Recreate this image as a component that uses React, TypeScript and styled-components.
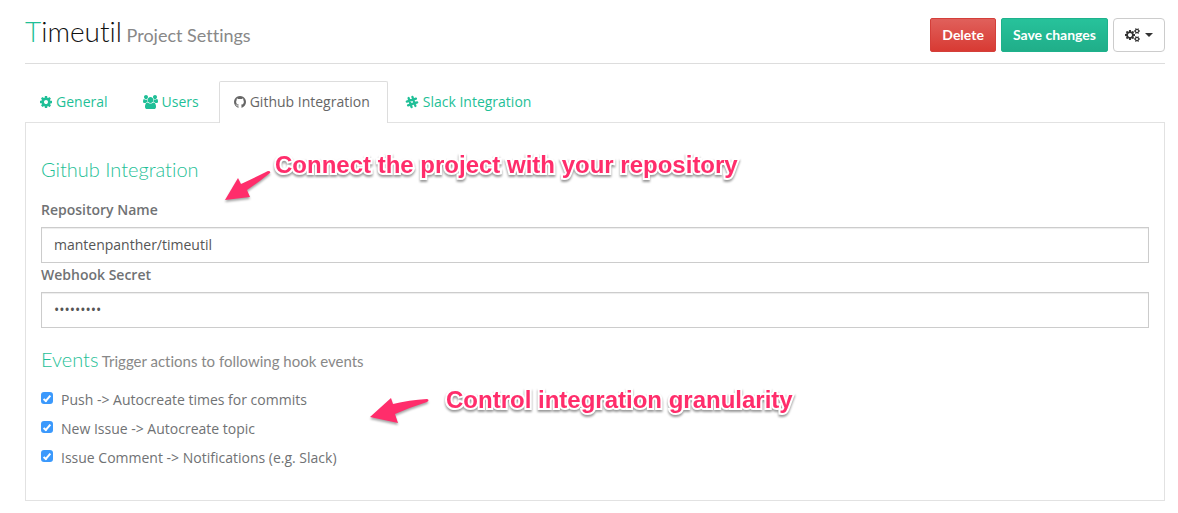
import React from 'react';
import styled, { createGlobalStyle, css } from 'styled-components';

const GREEN = '#1fbf97';
const PINK = '#ff2d6b';

const GlobalStyle = createGlobalStyle`
  *, *::before, *::after { box-sizing: border-box; }
  body {
    margin: 0;
    background: #fff;
    color: #707274;
    font-family: "Open Sans", sans-serif;
    font-size: 14px;
    line-height: 20px;
    font-variant-ligatures: none;
  }
`;

const Page = styled.main`
  padding: 15px 13px 12px 25px;
`;

const Header = styled.header`
  display: flex;
  justify-content: space-between;
  align-items: flex-start;
  padding-bottom: 11px;
  border-bottom: 1px solid #ddd;
`;

const Title = styled.h1`
  margin: 0;
  color: #111;
  font-family: Lato, sans-serif;
  font-size: 28px;
  font-weight: 300;
  line-height: 32px;
`;

const Initial = styled.span`
  color: ${GREEN};
`;

const Subtitle = styled.small<{ $size: number }>`
  color: #888;
  font-family: Lato, sans-serif;
  font-size: ${p => p.$size}px;
  font-weight: 400;
`;

const Actions = styled.div`
  display: flex;
  gap: 5px;
  padding-top: 3px;
`;

const tones = {
  danger: css`
    color: #fff;
    border-color: #d43f3a;
    background: linear-gradient(#e0605b, #d83a33);
  `,
  primary: css`
    color: #fff;
    border-color: #1eb28c;
    background: linear-gradient(#27c29b, #20ae89);
  `,
  plain: css`
    color: #333;
    border-color: #ccc;
    border-radius: 4px;
    background: #fff;
  `,
};

const Button = styled.button<{ $tone: keyof typeof tones }>`
  display: flex;
  align-items: center;
  gap: 5px;
  height: 34px;
  padding: 0 11px;
  border: 1px solid;
  border-radius: 2px;
  font-family: Lato, sans-serif;
  font-size: 14px;
  font-weight: 700;
  line-height: 20px;
  cursor: pointer;
  ${p => tones[p.$tone]}
`;

const Caret = styled.span`
  border: 4px solid transparent;
  border-top-color: currentColor;
  border-bottom: 0;
`;

const Tabs = styled.nav`
  display: flex;
  margin-top: 17px;
`;

const Tab = styled.a<{ $active?: boolean }>`
  display: flex;
  align-items: center;
  gap: 4px;
  height: 42px;
  margin-right: 2px;
  padding: 0 17px 2px 14px;
  border: 1px solid transparent;
  border-bottom: 0;
  border-radius: 2px 2px 0 0;
  color: ${GREEN};
  text-decoration: none;
  white-space: nowrap;
  ${p => p.$active && css`
    position: relative;
    z-index: 1;
    color: #666;
    border-color: #ddd;
    background: #fff;
  `}
`;

const Glyph = styled.svg`
  fill: currentColor;
`;

const Panel = styled.form`
  position: relative;
  margin-top: -1px;
  padding: 30px 15px 32px;
  border: 1px solid #e2e2e2;
`;

const SectionTitle = styled.h2`
  margin: 0;
  padding: 4px 0;
  color: ${GREEN};
  font-family: Lato, sans-serif;
  font-size: 20px;
  font-weight: 300;
  line-height: 24px;
`;

const Fields = styled.div`
  padding: 13px 0 15px;
`;

const Label = styled.label`
  display: block;
  padding: 2px 0 7px;
  font-weight: 600;
`;

const Input = styled.input`
  display: block;
  width: 100%;
  height: 36px;
  padding: 0 12px 2px;
  border: 1px solid #ccc;
  border-radius: 0;
  color: #555;
  background: #fff;
  box-shadow: inset 0 1px 1px rgba(0, 0, 0, 0.075);
  font: inherit;
`;

const Events = styled.div`
  display: flex;
  flex-direction: column;
  gap: 9px;
  padding-top: 13px;
`;

const Option = styled.label`
  display: flex;
  align-items: flex-start;
  gap: 8px;
`;

const Check = styled.input`
  appearance: none;
  width: 12px;
  height: 12px;
  margin: 2px 0 0;
  border-radius: 3px;
  background: #3b99fc;
  display: grid;
  place-items: center;
  &:checked::after {
    content: "";
    width: 4px;
    height: 8px;
    border: solid #fff;
    border-width: 0 2px 2px 0;
    transform: rotate(40deg);
  }
`;

const Note = styled.div<{ $top: number; $left: number }>`
  position: absolute;
  top: ${p => p.$top}px;
  left: ${p => p.$left}px;
  display: flex;
  pointer-events: none;
`;

const Arrow = styled.svg`
  overflow: visible;
  fill: ${PINK};
  filter: drop-shadow(0 2px 1px rgba(0, 0, 0, 0.35));
`;

const NoteText = styled.span`
  color: ${PINK};
  font-family: "Liberation Sans", sans-serif;
  font-size: 24px;
  font-weight: 700;
  line-height: 28px;
  white-space: nowrap;
  -webkit-text-stroke: 4px #fff;
  paint-order: stroke fill;
  filter: drop-shadow(0 2px 1px rgba(0, 0, 0, 0.4));
`;

const GearIcon = () => (
  <Glyph viewBox="128 128 1536 1536" width="12" height="12">
    <path d="M1152 896q0-106-75-181t-181-75-181 75-75 181 75 181 181 75 181-75 75-181zm512-109v222q0 12-8 23t-20 13l-185 28q-19 54-39 91 35 50 107 138 10 12 10 25t-9 23q-27 37-99 108t-94 71q-12 0-26-9l-138-108q-44 23-91 38-16 136-29 186-7 28-36 28h-222q-14 0-24.500-8.500t-11.500-21.500l-28-184q-49-16-90-37l-141 107q-10 9-25 9-14 0-25-11-126-114-165-168-7-10-7-23 0-12 8-23 15-21 51-66.500t54-70.500q-27-50-41-99l-183-27q-13-2-21-12.500t-8-23.500v-222q0-12 8-23t19-13l186-28q14-46 39-92-40-57-107-138-10-12-10-24 0-10 9-23 26-36 98.500-107.500t94.500-71.500q13 0 26 10l138 107q44-23 91-38 16-136 29-186 7-28 36-28h222q14 0 24.500 8.500t11.500 21.500l28 184q49 16 90 37l142-107q9-9 24-9 13 0 25 10 129 119 165 170 7 8 7 22 0 12-8 23-15 21-51 66.500t-54 70.500q26 50 41 98l183 28q13 2 21 12.500t8 23.500z" />
  </Glyph>
);

const GearsIcon = () => (
  <Glyph viewBox="0 0 1920 1792" width="15" height="14">
    <path d="M896 896q0-106-75-181t-181-75-181 75-75 181 75 181 181 75 181-75 75-181zm768 512q0-52-38-90t-90-38-90 38-38 90q0 53 37.500 90.500t90.500 37.500 90.500-37.500 37.500-90.500zm0-1024q0-52-38-90t-90-38-90 38-38 90q0 53 37.500 90.500t90.500 37.500 90.500-37.500 37.500-90.500zm-384 421v185q0 10-7 19.500t-16 10.500l-155 24q-11 35-32 76 34 48 90 115 7 11 7 20 0 12-7 19-23 30-82.500 89.500t-78.500 59.500q-11 0-21-7l-115-90q-37 19-77 31-11 108-23 155-7 24-30 24h-186q-11 0-20-7.500t-10-17.500l-23-153q-34-10-75-31l-118 89q-7 7-20 7-11 0-21-8-144-133-144-160 0-9 7-19 10-14 41-53t47-61q-23-44-35-82l-152-24q-10-1-17-9.500t-7-19.500v-185q0-10 7-19.500t16-10.500l155-24q11-35 32-76-34-48-90-115-7-11-7-20 0-12 7-20 22-30 82-89t79-59q11 0 21 7l115 90q34-18 77-32 11-108 23-154 7-24 30-24h186q11 0 20 7.500t10 17.500l23 153q34 10 75 31l118-89q8-7 20-7 11 0 21 8 144 133 144 160 0 8-7 19-12 16-42 54t-45 60q23 48 34 82l152 23q10 2 17 10.500t7 19.500zm640 533v140q0 16-149 31-12 27-30 52 51 113 51 138 0 4-4 7-122 71-124 71-8 0-46-47t-52-68q-20 2-30 2t-30-2q-14 21-52 68t-46 47q-2 0-124-71-4-3-4-7 0-25 51-138-18-25-30-52-149-15-149-31v-140q0-16 149-31 13-29 30-52-51-113-51-138 0-4 4-7 4-2 35-20t59-34 30-16q8 0 46 46.500t52 67.500q20-2 30-2t30 2q51-71 92-112l6-2q4 0 124 70 4 3 4 7 0 25-51 138 17 23 30 52 149 15 149 31zm0-1024v140q0 16-149 31-12 27-30 52 51 113 51 138 0 4-4 7-122 71-124 71-8 0-46-47t-52-68q-20 2-30 2t-30-2q-14 21-52 68t-46 47q-2 0-124-71-4-3-4-7 0-25 51-138-18-25-30-52-149-15-149-31v-140q0-16 149-31 13-29 30-52-51-113-51-138 0-4 4-7 4-2 35-20t59-34 30-16q8 0 46 46.500t52 67.500q20-2 30-2t30 2q51-71 92-112l6-2q4 0 124 70 4 3 4 7 0 25-51 138 17 23 30 52 149 15 149 31z" />
  </Glyph>
);

const UsersIcon = () => (
  <Glyph viewBox="0 0 1920 1792" width="15" height="14">
    <path d="M593 896q-162 5-265 128h-134q-82 0-138-40.500t-56-118.500q0-353 124-353 6 0 43.500 21t97.500 42.500 119 21.500q67 0 133-23-5 37-5 66 0 143 83 264zm1071 637q0 120-73 189.500t-194 69.500h-874q-121 0-194-69.500t-73-189.500q0-53 3.500-103.500t14-109 26.500-108.500 43-97.500 62-81 85.500-53.500 111.500-20q10 0 43 21.500t73 48 107 48 135 21.500 135-21.500 107-48 73-48 43-21.500q61 0 111.500 20t85.500 53.500 62 81 43 97.500 26.500 108.500 14 109 3.500 103.500zm-1024-1277q0 106-75 181t-181 75-181-75-75-181 75-181 181-75 181 75 75 181zm704 384q0 159-112.500 271.500t-271.500 112.500-271.500-112.500-112.500-271.500 112.500-271.500 271.500-112.500 271.500 112.500 112.500 271.500zm576 225q0 78-56 118.500t-138 40.500h-134q-103-123-265-128 83-121 83-264 0-29-5-66 66 23 133 23 59 0 119-21.500t97.500-42.500 43.500-21q124 0 124 353zm-128-609q0 106-75 181t-181 75-181-75-75-181 75-181 181-75 181 75 75 181z" />
  </Glyph>
);

const GithubIcon = () => (
  <Glyph viewBox="128 128 1536 1536" width="12" height="12">
    <path d="M896 128q209 0 385.500 103t279.500 279.500 103 385.500q0 251-146.500 451.500t-378.500 277.500q-27 5-40-7t-13-30q0-3 .5-76.500t.5-134.500q0-97-52-142 57-6 102.500-18t94-39 81-66.500 53-105 20.500-150.500q0-119-79-206 37-91-8-204-28-9-81 11t-92 44l-38 24q-93-26-192-26t-192 26q-16-11-42.500-27t-83.500-38.500-85-13.500q-45 113-8 204-79 87-79 206 0 85 20.500 150t52.500 105 80.500 67 94 39 102.500 18q-39 36-49 103-21 10-45 15t-57 5-65.500-21.500-55.500-62.500q-19-32-48.500-52t-49.500-24l-20-3q-21 0-29 4.500t-5 11.500 9 14 13 12l7 5q22 10 43.500 38t31.500 51l10 23q13 38 44 61.500t67 30 69.500 7 55.500-3.500l23-4q0 38 .5 88.500t.5 54.500q0 18-13 30t-40 7q-232-77-378.500-277.500t-146.500-451.500q0-209 103-385.500t279.500-279.500 385.500-103z" />
  </Glyph>
);

const SlackIcon = () => (
  <Glyph viewBox="0 0 14 14" width="14" height="14">
    <g transform="rotate(-18 7 7)" stroke="currentColor" strokeWidth="2.3" strokeLinecap="round">
      <path d="M5 2.200v9.600M9 2.200v9.600M2.200 5h9.600M2.200 9h9.600" />
    </g>
  </Glyph>
);

const events = [
  'Push -> Autocreate times for commits',
  'New Issue -> Autocreate topic',
  'Issue Comment -> Notifications (e.g. Slack)',
];

export default function App() {
  return (
    <>
      <GlobalStyle />
      <Page>
        <Header>
          <Title>
            <Initial>T</Initial>imeutil<Subtitle $size={18}> Project Settings</Subtitle>
          </Title>
          <Actions>
            <Button type="button" $tone="danger">Delete</Button>
            <Button type="button" $tone="primary">Save changes</Button>
            <Button type="button" $tone="plain" aria-label="More actions">
              <GearsIcon />
              <Caret />
            </Button>
          </Actions>
        </Header>
        <Tabs>
          <Tab href="#general"><GearIcon />General</Tab>
          <Tab href="#users"><UsersIcon />Users</Tab>
          <Tab href="#github" $active aria-current="page"><GithubIcon />Github Integration</Tab>
          <Tab href="#slack"><SlackIcon />Slack Integration</Tab>
        </Tabs>
        <Panel>
          <SectionTitle>Github Integration</SectionTitle>
          <Fields>
            <Label htmlFor="repository">Repository Name</Label>
            <Input id="repository" defaultValue="mantenpanther/timeutil" />
            <Label htmlFor="secret">Webhook Secret</Label>
            <Input id="secret" type="password" autoComplete="off" defaultValue="timeutils" />
          </Fields>
          <SectionTitle>
            Events<Subtitle $size={15}> Trigger actions to following hook events</Subtitle>
          </SectionTitle>
          <Events>
            {events.map(name => (
              <Option key={name}>
                <Check type="checkbox" defaultChecked />
                {name}
              </Option>
            ))}
          </Events>
          <Note $top={28} $left={198}>
            <Arrow width="51" height="52" viewBox="0 0 51 52">
              <path d="M1 49L14 27L17 33Q30 27 44 20Q47 20 46 22Q35 31 23 39L26 46Z" />
            </Arrow>
            <NoteText>Connect the project with your repository</NoteText>
          </Note>
          <Note $top={263} $left={343}>
            <Arrow width="77" height="52" viewBox="0 0 77 52">
              <path d="M1 31L22 12L24 18Q40 14 58 13Q61 14 58 16Q42 21 26 28L29 37Z" />
            </Arrow>
            <NoteText>Control integration granularity</NoteText>
          </Note>
        </Panel>
      </Page>
    </>
  );
}
